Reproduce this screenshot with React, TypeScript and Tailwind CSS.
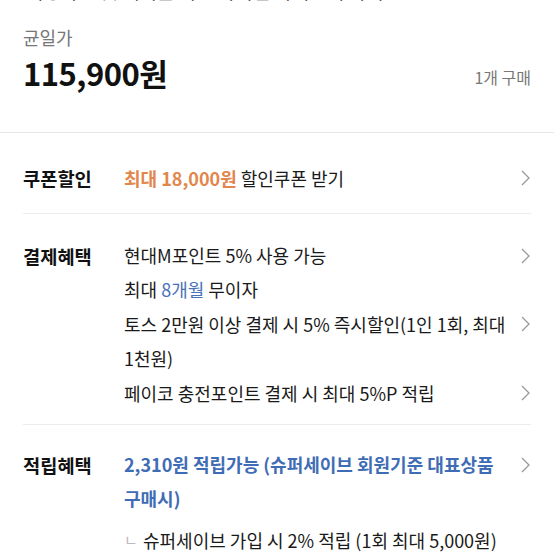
import { ReactNode } from 'react';

const font = { fontFamily: '"Noto Sans CJK KR", "Noto Sans", sans-serif' };

const Chevron = () => (
  <svg width="9" height="16" viewBox="0 0 9 16" fill="none" className="shrink-0">
    <polyline points="1,1 8,8 1,15" stroke="#9a9a9a" strokeWidth="1.3" fill="none" />
  </svg>
);

const Line = ({ children, arrow }: { children: ReactNode; arrow?: boolean }) => (
  <div className="flex items-center justify-between h-[34.4px]">
    <div className="whitespace-nowrap">{children}</div>
    {arrow ? <Chevron /> : null}
  </div>
);

const Row = ({ label, children, className }: { label: string; children: ReactNode; className: string }) => (
  <div className={`flex pl-[23px] pr-[24px] ${className}`}>
    <div className="w-[101px] shrink-0 h-[34.4px] flex items-center text-[18.7px] font-bold text-[#111]">{label}</div>
    <div className="flex-1 text-[18px] text-[#1a1a1a]">{children}</div>
  </div>
);

export default function App() {
  return (
    <div className="w-[554px] h-[554px] bg-white overflow-hidden" style={font}>
      {/* Title (cut off) */}
      <div className="h-[4px] overflow-hidden px-[26px]">
        <div className="-mt-[22px] text-[19px] leading-[26px] text-[#222] whitespace-nowrap">
          여성 루즈핏 케이블 니트 가디건 아이보리 화이트
        </div>
      </div>

      {/* Price */}
      <div className="px-[23px] pt-[23px] h-[128px]">
        <div className="text-[18px] leading-[20px] text-[#777]">균일가</div>
        <div className="flex items-end justify-between mt-[8px]">
          <div className="text-[31px] leading-[36px] font-bold text-[#111] tracking-[-0.5px]">115,900원</div>
          <div className="text-[16px] leading-[20px] text-[#777] mb-[4px]">1개 구매</div>
        </div>
      </div>

      <div className="border-t border-[#e6e6e6]" />

      <Row label="쿠폰할인" className="pt-[28px] pb-[18px]">
        <Line arrow>
          <span className="text-[#e2864c] font-semibold">최대 18,000원</span> 할인쿠폰 받기
        </Line>
      </Row>

      <div className="mx-[23px] border-t border-[#ececec]" />

      <Row label="결제혜택" className="pt-[24px] pb-[14px]">
        <Line arrow>현대M포인트 5% 사용 가능</Line>
        <Line>
          최대 <span className="text-[#4a72b8]">8개월</span> 무이자
        </Line>
        <Line arrow>토스 2만원 이상 결제 시 5% 즉시할인(1인 1회, 최대</Line>
        <Line>1천원)</Line>
        <Line arrow>페이코 충전포인트 결제 시 최대 5%P 적립</Line>
      </Row>

      <div className="mx-[23px] border-t border-[#ececec]" />

      <Row label="적립혜택" className="pt-[22px]">
        <Line arrow>
          <span className="text-[#3f6db5] font-semibold">2,310원 적립가능 (슈퍼세이브 회원기준 대표상품</span>
        </Line>
        <Line>
          <span className="text-[#3f6db5] font-semibold">구매시)</span>
        </Line>
        <div className="flex items-center h-[34px] mt-[7px] whitespace-nowrap">
          <span className="text-[#bbb] text-[15px] w-[19px]">ㄴ</span>
          슈퍼세이브 가입 시 2% 적립 (1회 최대 5,000원)
        </div>
      </Row>
    </div>
  );
}
